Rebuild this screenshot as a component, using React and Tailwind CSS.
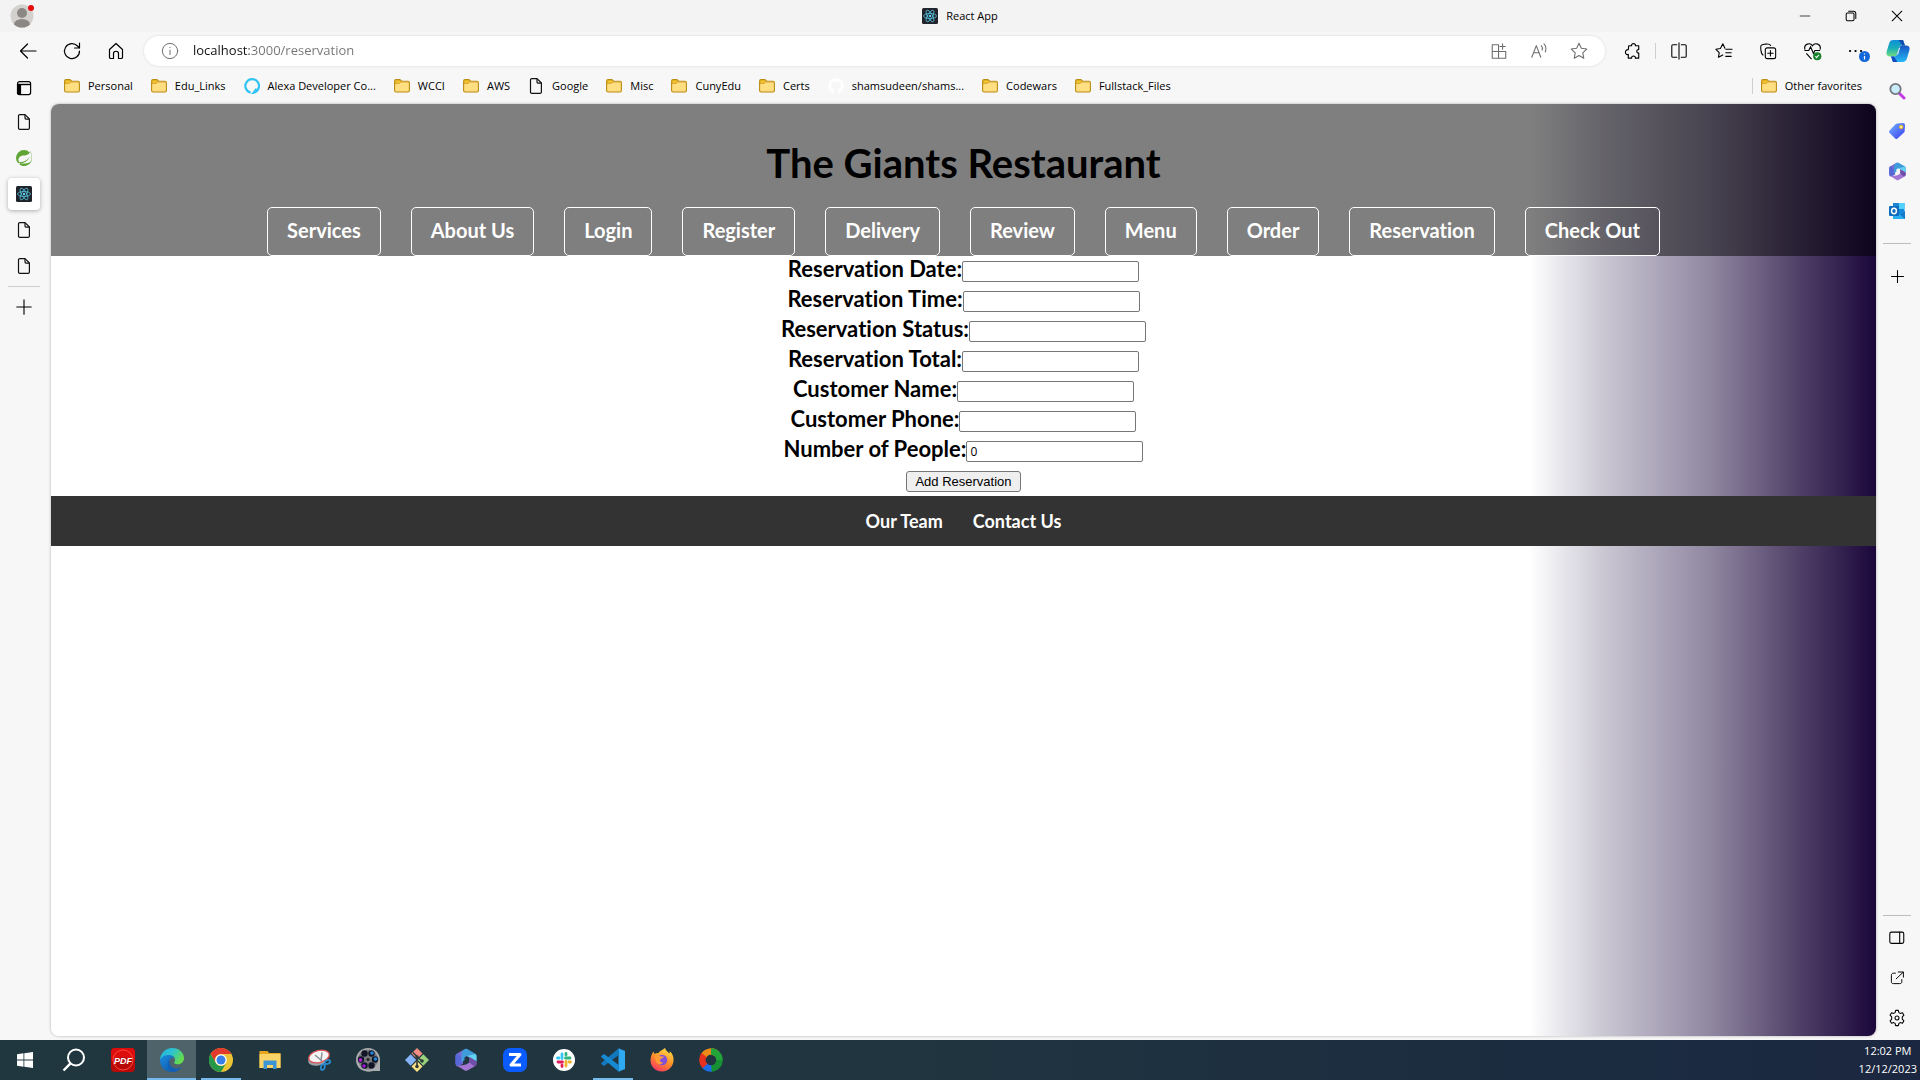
import React from "react";
import { SiSpring } from "react-icons/si";
import { FaGithub } from "react-icons/fa";

const bookmarks = [
  ["folder", "Personal"],
  ["folder", "Edu_Links"],
  ["alexa", "Alexa Developer Co..."],
  ["folder", "WCCI"],
  ["folder", "AWS"],
  ["page", "Google"],
  ["folder", "Misc"],
  ["folder", "CunyEdu"],
  ["folder", "Certs"],
  ["github", "shamsudeen/shams..."],
  ["folder", "Codewars"],
  ["folder", "Fullstack_Files"],
];

const navLinks = ["Services", "About Us", "Login", "Register", "Delivery", "Review", "Menu", "Order", "Reservation", "Check Out"];

const fields = [
  ["date", "Reservation Date:", ""],
  ["time", "Reservation Time:", ""],
  ["status", "Reservation Status:", ""],
  ["total", "Reservation Total:", ""],
  ["name", "Customer Name:", ""],
  ["phone", "Customer Phone:", ""],
  ["people", "Number of People:", "0"],
];

function Line({ size = 20, className = "", children, width = 1.2 }) {
  return (
    <svg width={size} height={size} viewBox="0 0 20 20" fill="none" stroke="currentColor" strokeWidth={width} strokeLinecap="round" strokeLinejoin="round" className={className} aria-hidden="true">
      {children}
    </svg>
  );
}

function Folder() {
  return (
    <svg width="16" height="16" viewBox="0 0 16 16" aria-hidden="true">
      <path d="M.6 3.2c0-.9.6-1.6 1.5-1.6h3.4c.5 0 .9.2 1.2.6l.9 1h6.3c.9 0 1.5.7 1.5 1.5v7.8c0 .9-.6 1.5-1.5 1.5H2.1c-.9 0-1.5-.6-1.5-1.5z" fill="#ffdf82" stroke="#b98a10" strokeWidth="1.1" />
      <path d="M1.1 5.4V3.2c0-.6.4-1.1 1-1.1h3.4l1.6 1.6-1.2 1.2c-.3.3-.6.5-1 .5z" fill="#f5c32f" stroke="#c4961a" strokeWidth=".7" />
      <path d="M6.7 3.8h7.4c.5 0 .9.3 1 .8H6z" fill="#d9a93c" />
    </svg>
  );
}

function PageIcon() {
  return (
    <svg width="16" height="16" viewBox="0 0 16 16" fill="none" stroke="#111" strokeWidth="1.2" strokeLinejoin="round" aria-hidden="true">
      <path d="M3.8.6h5.2l4.4 4.4v9.1c0 .8-.5 1.3-1.3 1.3H3.8c-.8 0-1.3-.5-1.3-1.3V1.9C2.500 1.100 3 .6 3.800.6z" />
      <path d="M9 .8v3.300c0 .6.4 1 1 1h3.200" />
    </svg>
  );
}

function AlexaIcon() {
  return (
    <svg width="16" height="16" viewBox="0 0 16 16" aria-hidden="true">
      <path d="M6.600 14.600A6.800 6.800 0 1 1 9.800 14.600C11 13.300 11.800 12 12.300 10.600" fill="none" stroke="#31c4f3" strokeWidth="2.200" />
    </svg>
  );
}

function ReactIcon() {
  return (
    <svg width="16" height="16" viewBox="0 0 32 32" aria-hidden="true">
      <rect width="32" height="32" rx="3" fill="#20232a" />
      <g fill="none" stroke="#53c1de" strokeWidth="1.600">
        <ellipse cx="16" cy="16" rx="13" ry="5" />
        <ellipse cx="16" cy="16" rx="13" ry="5" transform="rotate(60 16 16)" />
        <ellipse cx="16" cy="16" rx="13" ry="5" transform="rotate(120 16 16)" />
      </g>
      <circle cx="16" cy="16" r="2.400" fill="#61dafb" />
    </svg>
  );
}

function BookmarkIcon({ kind }) {
  if (kind === "folder") return <Folder />;
  if (kind === "page") return <PageIcon />;
  if (kind === "alexa") return <AlexaIcon />;
  return <FaGithub size={16} color="#ffffff" aria-hidden="true" />;
}

function Avatar() {
  return (
    <svg width="26" height="26" viewBox="0 0 26 26" aria-hidden="true">
      <defs><clipPath id="avatar"><circle cx="12" cy="13" r="11.500" /></clipPath></defs>
      <circle cx="12" cy="13" r="11.500" fill="#d3d1ce" />
      <g clipPath="url(#avatar)" fill="#8b8784">
        <circle cx="12" cy="10" r="5" />
        <ellipse cx="12" cy="21.500" rx="8" ry="5.500" />
      </g>
      <circle cx="21" cy="5" r="3" fill="#e60c0c" />
    </svg>
  );
}

function Copilot() {
  return (
    <svg width="24" height="24" viewBox="0 0 24 24" aria-hidden="true">
      <defs>
        <linearGradient id="cpA" x1="0" y1="0" x2="0" y2="1"><stop offset="0" stopColor="#0c8fd8" /><stop offset=".5" stopColor="#19aeb8" /><stop offset="1" stopColor="#73dc7c" /></linearGradient>
        <linearGradient id="cpB" x1="0" y1="0" x2="0" y2="1"><stop offset="0" stopColor="#1557c5" /><stop offset="1" stopColor="#26b8f5" /></linearGradient>
      </defs>
      <path d="M11 1h6l2 5.500h-3c-2 0-2.600 1-3.100 2.500L11.500 14c-.7 2-1.500 3.500-4 3.500H4c-3 0-4.200-2-3.300-5L3 4.700C3.800 2 5 1 7.500 1z" fill="url(#cpA)" />
      <path d="M13 23H7l-2-5.500h3c2 0 2.600-1 3.100-2.500l1.400-5c.7-2 1.500-3.500 4-3.500H20c3 0 4.200 2 3.300 5L21 19.300c-.8 2.700-2 3.700-4.500 3.700z" fill="url(#cpB)" />
      <path d="M12.500 1H17l2 5.500h-2.800z" fill="#124eb2" />
      <path d="M11.500 23H7l-2-5.500h3z" fill="#144ac0" />
      <path d="m12.900 9-1.400 5-.7 1.500h1.300l1.400-5 .8-2z" fill="#e8f8fb" />
    </svg>
  );
}

function M365({ size }) {
  return (
    <svg width={size} height={size} viewBox="0 0 24 24" aria-hidden="true">
      <path d="M11 1 3.500 5.200C2 6 1.500 7 1.500 8.500v7c0 2.300 1.600 3.600 3.800 2.500L9 15.500v-7z" fill="#7a6ad4" />
      <path d="M1.500 14.500c0 2.500 1.800 4 4.200 2.700L9 15.400l-2-1.600V9L3.400 5.300C2 6.200 1.500 7 1.500 8.500z" fill="#5668d8" />
      <path d="M11 1C8 2.800 7.500 4.500 7.500 7v7l3-1.800V9.500L13 8l9.500 5V8.500c0-1.500-.5-2.500-2-3.300L13.300 1c-.8-.4-1.600-.4-2.300 0z" fill="#3f9cdb" />
      <path d="m13 8 9.500 5.300V8.500c0-1-.3-1.900-1-2.500z" fill="#63d2f0" />
      <path d="M22.500 13.500 15.500 9v5.500L12 16.600 3.500 18l7.300 4.600c.9.500 1.600.5 2.500 0l7.200-4.100c1.500-.9 2-1.800 2-3.300z" fill="#a276d2" />
      <path d="M22.500 13.500 15.500 9v5.500l4.800 4c1.600-.9 2.200-1.800 2.200-3.300z" fill="#704da9" />
    </svg>
  );
}

function SearchColor() {
  return (
    <svg width="18" height="18" viewBox="0 0 18 18" aria-hidden="true">
      <path d="m11 11 5 5" stroke="#c43be5" strokeWidth="3" strokeLinecap="round" />
      <circle cx="7.500" cy="7" r="5.200" fill="#c9ecfb" stroke="#73777d" strokeWidth="1.800" />
    </svg>
  );
}

function Tag() {
  return (
    <svg width="18" height="18" viewBox="0 0 18 18" aria-hidden="true">
      <defs><linearGradient id="tag" x1="0" y1="0" x2="1" y2="1"><stop offset="0" stopColor="#72b4fb" /><stop offset="1" stopColor="#3a3cf1" /></linearGradient></defs>
      <path d="M9 1.500 15 1c1.200 0 2 .8 2 2l-.3 6c0 .6-.3 1-.7 1.500L9.500 16.500c-.8.700-1.600.7-2.300 0L1.600 11c-.8-.8-.8-1.600 0-2.400L7.500 2.200C8 1.800 8.400 1.500 9 1.500z" fill="url(#tag)" />
      <circle cx="13.200" cy="5" r="1.700" fill="#fff3a0" stroke="#f0b51c" strokeWidth="1" />
    </svg>
  );
}

function Outlook() {
  return (
    <svg width="18" height="18" viewBox="0 0 18 18" aria-hidden="true">
      <path d="M5 1h11.500v15.500H5z" fill="#1689da" />
      <path d="M5 1h6v6H5z" fill="#1a86d3" />
      <path d="M11 1h5.500v6H11z" fill="#52d2fb" />
      <path d="m17 9-6 4-6-2v6h12z" fill="#29aef0" />
      <path d="m17 9-5 3.500 5 4.500z" fill="#1479c9" />
      <rect x="1" y="4" width="10" height="10" rx="1" fill="#0f6dbd" />
      <ellipse cx="6" cy="9" rx="2.400" ry="2.700" fill="none" stroke="#fff" strokeWidth="1.500" />
    </svg>
  );
}

function TaskIcon({ kind }) {
  const box = { width: 24, height: 24, viewBox: "0 0 24 24", "aria-hidden": true };
  switch (kind) {
    case "Start":
      return (
        <svg {...box}><path d="M4 6.200 10.500 5.300V11.600H4zM11.300 5.200 20 4v7.600h-8.700zM4 12.400h6.500v6.300L4 17.800zM11.300 12.400H20V20l-8.700-1.200z" fill="#fff" /></svg>
      );
    case "Search":
      return (
        <svg {...box} fill="none" stroke="#fff" strokeWidth="2"><circle cx="14" cy="9.500" r="8" /><path d="M8.500 15.300 1.500 22.500" strokeWidth="2.400" /></svg>
      );
    case "PDF":
      return (
        <svg {...box}>
          <rect width="24" height="24" rx="4" fill="#b80909" />
          <path d="M4 0h16a4 4 0 0 1 4 4v9C17 8 7 8 0 13V4a4 4 0 0 1 4-4z" fill="#dc0d0d" />
          <circle cx="12" cy="12" r="10" fill="none" stroke="#ff4538" strokeWidth="1" />
          <text x="12" y="15.500" textAnchor="middle" fontFamily="Liberation Sans, sans-serif" fontWeight="700" fontStyle="italic" fontSize="9" fill="#fff">PDF</text>
        </svg>
      );
    case "Edge":
      return (
        <svg {...box}>
          <defs>
            <linearGradient id="edgeTop" x1="0" y1="0" x2="1" y2=".5"><stop offset="0" stopColor="#24b1df" /><stop offset=".5" stopColor="#2cc3d2" /><stop offset="1" stopColor="#65dc4b" /></linearGradient>
            <linearGradient id="edgeLow" x1="0" y1="0" x2="1" y2="1"><stop offset="0" stopColor="#1b8be0" /><stop offset="1" stopColor="#0c4fa0" /></linearGradient>
          </defs>
          <path d="M0 12C.4 5 5.300 0 12 0c7.500 0 12 5 12 10 0 4-3 6.300-6.300 6.300-2.700 0-4.400-1-3.200-2.500 1.600-2 .2-6-4.500-6-5 0-8.500 2-10 4.200z" fill="url(#edgeTop)" />
          <path d="M0 12c1.500-3 4.500-5 9-4.900 3 0 4.500 1.200 5 2.400-3 0-5.500 2.300-5.500 5.500 0 4.500 4.700 6.700 9 5.700 1.300-.3 2.300-.8 3.600-1.500C19.300 22 16 24 12 24 5 24 0 18.500 0 12z" fill="url(#edgeLow)" />
          <path d="M9.500 11.500C6 15 7.500 21.500 12.500 24c3.500 0 6.500-1.800 8.600-4.800-5 2.700-12.400 1.100-11.600-7.700z" fill="#1460b5" />
        </svg>
      );
    case "Chrome":
      return (
        <svg {...box}>
          <circle cx="12" cy="12" r="12" fill="#eac435" />
          <path d="M1.600 6A12 12 0 0 1 22.400 6H12a6 6 0 0 0-5.200 9z" fill="#e1392c" />
          <path d="M1.600 6A12 12 0 0 0 12 24l5.200-9A6 6 0 0 1 6.800 15z" fill="#25994a" />
          <circle cx="12" cy="12" r="5.800" fill="#fff" />
          <circle cx="12" cy="12" r="4.500" fill="#397fea" />
        </svg>
      );
    case "File Explorer":
      return (
        <svg {...box}>
          <path d="M1.500 3h8l1.500 2h11.500v15h-21z" fill="#e8a51e" />
          <path d="M1.500 6h21v14h-21z" fill="#fbd469" />
          <path d="M5.500 12.500h13V21H15v-4H9v4H5.500z" fill="#3d95d5" />
        </svg>
      );
    case "Snipping Tool":
      return (
        <svg {...box}>
          <ellipse cx="11" cy="11.500" rx="10" ry="6" transform="rotate(-14 11 11.500)" fill="#9ca2a6" />
          <ellipse cx="12" cy="8.500" rx="10.500" ry="6" transform="rotate(-14 12 8.500)" fill="#f4f4f4" stroke="#dc5256" strokeWidth="1.300" />
          <path d="M8 7l7 6M15 4.500 14 13" stroke="#8a9298" strokeWidth="1.500" />
          <g fill="none" stroke="#2b8dd4" strokeWidth="1.700"><ellipse cx="20.500" cy="14" rx="2.800" ry="1.800" transform="rotate(-20 20.500 14)" /><ellipse cx="15.800" cy="19" rx="1.900" ry="3" transform="rotate(15 15.800 19)" /></g>
        </svg>
      );
    case "Movie Maker":
      return (
        <svg {...box}>
          <path d="M12 0c7 0 12 5 12 12 0 4 0 8 1 11h-8C14 24 11 24 9 23 4 22 0 18 0 12 0 5 5 0 12 0z" fill="#a9abae" />
          <circle cx="12" cy="11.500" r="10" fill="#77797d" />
          <g fill="#111526"><circle cx="8.500" cy="5.500" r="3.200" /><circle cx="15.500" cy="5.500" r="3.200" /><circle cx="19" cy="11.500" r="3.200" /><circle cx="15.500" cy="17.500" r="3.200" /><circle cx="8.500" cy="17.500" r="3.200" /><circle cx="5" cy="11.500" r="3.200" /></g>
          <circle cx="16" cy="5" r="1.800" fill="#2187dd" /><circle cx="19.500" cy="11" r="1.800" fill="#2187dd" /><circle cx="4.500" cy="12" r="1.800" fill="#c11be2" /><circle cx="8" cy="18" r="1.800" fill="#9c15d2" />
          <circle cx="12" cy="11.500" r="1.500" fill="#222" />
        </svg>
      );
    case "Git":
      return (
        <svg {...box}>
          <path d="m12 0 5.500 5.500L12 11 6.500 5.500z" fill="#f18b83" />
          <path d="m5.700 6.300 5.500 5.700-5.500 5.700L0 12z" fill="#87b4f7" />
          <path d="M18.300 6.300 24 12l-5.700 5.700-5.500-5.700z" fill="#9bd37d" />
          <path d="m12 13 5.500 5.500L12 24l-5.500-5.500z" fill="#fbe184" />
          <path d="M8 4.500 12 8.500v10M12 9l5 4" fill="none" stroke="#303a3b" strokeWidth="1.600" />
          <circle cx="12" cy="9" r="1.800" fill="#303a3b" /><circle cx="17" cy="13" r="1.800" fill="#303a3b" /><circle cx="12" cy="18.500" r="1.800" fill="#303a3b" />
        </svg>
      );
    case "Microsoft 365":
      return <M365 size={24} />;
    case "Zoom":
      return (
        <svg {...box}><rect width="24" height="24" rx="7" fill="#0b5cff" /><path d="M6 6.500h11L8 17h10" fill="none" stroke="#fff" strokeWidth="3" strokeLinejoin="round" /></svg>
      );
    case "Slack":
      return (
        <svg {...box}>
          <circle cx="12" cy="12" r="11" fill="#fff" />
          <g strokeWidth="2.800" strokeLinecap="round">
            <path d="M10 6v4.500" stroke="#36c5f0" /><path d="M5.500 10H7" stroke="#36c5f0" />
            <path d="M18 10h-4.500" stroke="#2eb67d" /><path d="M14 5.500V7" stroke="#2eb67d" />
            <path d="M14 18v-4.500" stroke="#ecb22e" /><path d="M18.500 14H17" stroke="#ecb22e" />
            <path d="M6 14h4.500" stroke="#e01e5a" /><path d="M10 18.500V17" stroke="#e01e5a" />
          </g>
        </svg>
      );
    case "Visual Studio Code":
      return (
        <svg {...box}>
          <path d="M17.500.3 24 3v18l-6.500 2.700z" fill="#2fa9f2" />
          <path d="M17.800.3V7L3 18 .5 16.300c-.5-.4-.5-1 0-1.500z" fill="#1277bd" />
          <path d="M17.800 23.700V17L3 6 .5 7.700c-.5.400-.5 1 0 1.500z" fill="#168bd4" />
        </svg>
      );
    case "Firefox":
      return (
        <svg {...box}>
          <defs><linearGradient id="fox" x1=".8" y1="0" x2=".3" y2="1"><stop offset="0" stopColor="#ffe14a" /><stop offset=".5" stopColor="#ff9326" /><stop offset="1" stopColor="#f53862" /></linearGradient></defs>
          <path d="M15 0c1 3 3 4 4.500 5.500.3-.8.300-1.600 0-2.500C22.500 5.500 24 9 23.500 13 22.800 19.200 18 23.500 12 23.500S.5 19 .5 12.500C.5 9 1.500 6 3.500 3.500L4.500 6c1.500-1 2.500-1 3.800-.8C10 2.500 12 2.500 15 0z" fill="url(#fox)" />
          <circle cx="12" cy="12" r="5.300" fill="#8450d8" />
          <path d="M4.500 7C7 6.500 9 7 10.500 8.500H14c-.5 2-3 1.500-3.800 3-1 2 .8 3.500 3 2.800-2 3.700-7.200 2.200-7.500-2z" fill="#ff9b35" />
        </svg>
      );
    default:
      return (
        <svg {...box} fill="none" strokeWidth="6.500">
          <path d="M4.500 8A8.500 8.500 0 0 1 18 6" stroke="#ee8a16" />
          <path d="M12 3.500A8.500 8.500 0 0 1 20.500 12" stroke="#22a43a" />
          <path d="M20.500 12A8.500 8.500 0 0 1 12 20.500" stroke="#178f35" />
          <path d="M12.500 20.500A8.500 8.500 0 0 1 5 16.800" stroke="#1d6ee6" />
          <path d="M6 18A8.500 8.500 0 0 1 5 7" stroke="#e5311d" />
        </svg>
      );
  }
}

const tasks = [
  ["Start"], ["Search"], ["PDF"], ["Edge", "active"], ["Chrome", "open"], ["File Explorer"], ["Snipping Tool"], ["Movie Maker"],
  ["Git"], ["Microsoft 365"], ["Zoom"], ["Slack"], ["Visual Studio Code", "open"], ["Firefox"], ["Browser"],
];

function IconButton({ label, className = "w-11", children }) {
  return (
    <button type="button" aria-label={label} className={`flex shrink-0 items-center justify-center ${className}`}>
      {children}
    </button>
  );
}

function TitleBar() {
  return (
    <header className="grid h-8 shrink-0 grid-cols-[1fr_auto_1fr] items-center bg-[#f3f3f3]">
      <IconButton label="Profile" className="ml-2.5 w-[26px]"><Avatar /></IconButton>
      <div className="flex items-center gap-2 text-[11px]"><ReactIcon /><span>React App</span></div>
      <div className="flex justify-end">
        <IconButton label="Minimize" className="w-[46px]"><Line size={12}><path d="M2 10h16" /></Line></IconButton>
        <IconButton label="Restore" className="w-[46px]"><Line size={12} width={1.700}><rect x="2" y="5" width="13" height="13" rx="2" /><path d="M6 2h8c3 0 4 1 4 4v8" /></Line></IconButton>
        <IconButton label="Close" className="w-[46px]"><Line size={12} width={1.700}><path d="m2 2 16 16M18 2 2 18" /></Line></IconButton>
      </div>
    </header>
  );
}

function Toolbar() {
  return (
    <div className="flex h-[38px] shrink-0 items-center pl-1.5">
      <IconButton label="Back"><Line><path d="M18 10H2.500M9.500 3 2.500 10l7 7" /></Line></IconButton>
      <IconButton label="Refresh"><Line><path d="M17.500 10A7.500 7.500 0 1 1 15.500 5l2 2M17.500 2v5h-5" /></Line></IconButton>
      <IconButton label="Home"><Line><path d="M3.500 8.500 10 2.500l6.500 6v7.700c0 .8-.5 1.300-1.300 1.300h-2.700v-5c0-3-5-3-5 0v5H4.800c-.8 0-1.300-.5-1.300-1.300z" /></Line></IconButton>
      <div className="ml-1.5 flex h-[30px] min-w-0 flex-1 items-center rounded-full bg-white pr-1.5 pl-[17px] text-[#6e6e6e] shadow-[0_0_3px_rgba(0,0,0,0.12)]">
        <Line size={18} width={1.100}><circle cx="10" cy="10" r="8.500" /><path d="M10 9v5M10 6v.3" /></Line>
        <input aria-label="Address" defaultValue="localhost:3000/reservation" className="ml-3.5 min-w-0 flex-1 bg-[linear-gradient(90deg,#111_56px,#737373_56px)] bg-clip-text text-[13px] text-transparent outline-none" />
        <IconButton label="Install app" className="w-10"><Line size={18}><path d="M2.500 3h7v15h-7zM2.500 10.500h15V18h-15M14 2v6M11 5h6" /></Line></IconButton>
        <IconButton label="Read aloud" className="w-10"><Line size={18}><path d="m2 17 5-13 5 13M4 12h6M12.500 4c1.500 1.500 1.500 3.500 1 5M15.500 2c2.500 2.500 2.500 6 1.500 9" /></Line></IconButton>
        <IconButton label="Add to favorites" className="w-10"><Line size={18}><path d="m10 1.500 2.600 5.500 6 .8-4.400 4.200 1.100 6-5.300-2.900L4.700 18l1.100-6L1.400 7.800l6-.8z" /></Line></IconButton>
      </div>
      <div className="ml-1.5 flex items-center">
        <IconButton label="Extensions"><Line size={19}><path d="M5 4h3c-.7-3 4.700-3 4 0h3.500v4c-2.700-.8-2.700 4.300 0 3.500V17H12c.7-3-4.700-3-4 0H4.500v-4C.5 14.500.5 7.500 4.500 8z" /></Line></IconButton>
        <span className="h-4 w-px bg-[#cfcfcf]" />
        <IconButton label="Split screen" className="w-[46px]"><Line size={18}><path d="M7.500 3H3.300C2.400 3 2 3.500 2 4.300v11.400c0 .8.400 1.300 1.300 1.300h4.200M12.500 3h4.200c.9 0 1.300.5 1.300 1.300v11.400c0 .8-.4 1.300-1.300 1.300h-4.200M10 1v18" /></Line></IconButton>
        <IconButton label="Favorites"><Line size={18}><path d="M11 7 8.700 2 6 7.300l-5 .8 3.700 3.700L3.800 17l4.900-2.500M12 8h7M12 12h6M12 16h6" /></Line></IconButton>
        <IconButton label="Collections"><Line size={18}><rect x="7" y="6.500" width="11.500" height="12" rx="2.200" /><path d="M12.700 9.500v6M9.700 12.500h6M4.500 14.500C2.500 13.500 2.500 12 2 8c-.5-4 0-5 4-5.500s6-1 7 1.500" /></Line></IconButton>
        <IconButton label="Browser essentials">
          <svg width="19" height="19" viewBox="0 0 20 20" fill="none" stroke="currentColor" strokeWidth="1.200" aria-hidden="true">
            <path d="M2 8C.5 2 7.500 0 10 4c2.500-4 9.500-2 8 4M1.500 9H6l2-4 3 7 1.500-3H18M3.500 12l5.500 6" />
            <circle cx="15" cy="15" r="4.300" fill="#14812b" stroke="none" /><path d="m13 15 1.300 1.500 2.500-3" stroke="#fff" />
          </svg>
        </IconButton>
        <IconButton label="Settings and more">
          <span className="relative">
            <Line size={20}><path d="M4 10h.1M9.500 10h.1M15 10h.1" strokeWidth="2.200" /></Line>
            <svg width="11" height="11" viewBox="0 0 11 11" className="absolute -right-1 bottom-[-1px]" aria-hidden="true"><circle cx="5.500" cy="5.500" r="5.500" fill="#1268d8" /><path d="M5.500 5v3.500M5.500 2.500v1" stroke="#fff" strokeWidth="1.200" /></svg>
          </span>
        </IconButton>
        <IconButton label="Copilot" className="w-[42px] pr-0.5"><Copilot /></IconButton>
      </div>
    </div>
  );
}

function TabRail() {
  return (
    <nav aria-label="Tabs" className="flex w-[51px] shrink-0 flex-col items-center pr-[3px]">
      <IconButton label="Tab actions" className="h-[34px] w-8 pt-0.5">
        <svg width="16" height="16" viewBox="0 0 16 16" fill="none" stroke="#000" strokeWidth="1.200" aria-hidden="true"><rect x="1.600" y="1.600" width="13" height="13" rx="2" /><path d="M1.600 4.500h13" strokeWidth="1.400" /><path d="M1.500 4.500h3v10h-2l-1-1z" fill="#000" /></svg>
      </IconButton>
      <IconButton label="New tab" className="h-9 w-8"><PageIcon /></IconButton>
      <IconButton label="Spring" className="h-9 w-8"><SiSpring size={16} color="#5fa535" /></IconButton>
      <div className="flex h-9 items-center">
        <IconButton label="React App" className="h-8 w-8 rounded-[4px] bg-white shadow-[0_1px_4px_rgba(0,0,0,0.3)]"><ReactIcon /></IconButton>
      </div>
      <IconButton label="New tab" className="h-9 w-8"><PageIcon /></IconButton>
      <IconButton label="New tab" className="h-9 w-8"><PageIcon /></IconButton>
      <hr className="my-0.5 w-8 border-[#cdcdcd]" />
      <IconButton label="Open a tab" className="h-9 w-8"><Line size={16} width={1.400}><path d="M10 1v18M1 10h18" /></Line></IconButton>
    </nav>
  );
}

function SideRail() {
  return (
    <aside className="flex w-11 shrink-0 flex-col items-center pr-0.5 pb-0.5">
      <IconButton label="Search sidebar" className="h-[41px] w-8"><SearchColor /></IconButton>
      <IconButton label="Shopping" className="h-10 w-8"><Tag /></IconButton>
      <IconButton label="Microsoft 365" className="h-10 w-8"><M365 size={19} /></IconButton>
      <IconButton label="Outlook" className="h-10 w-8"><Outlook /></IconButton>
      <hr className="mt-3 mb-3 w-7 border-[#bdbdbd]" />
      <IconButton label="Customize" className="h-10 w-8"><Line size={15} width={1.400}><path d="M10 2v16M2 10h16" /></Line></IconButton>
      <div className="flex-1" />
      <hr className="mb-0.5 w-7 border-[#bdbdbd]" />
      <IconButton label="Toggle sidebar" className="h-10 w-8"><Line size={18}><rect x="2" y="3.500" width="15.500" height="12.500" rx="1.800" /><path d="M13 3.500V16" /></Line></IconButton>
      <IconButton label="Open in new window" className="h-10 w-8"><Line size={16}><path d="M8 4H5.500C4 4 3 5 3 6.500v8.300C3 16.300 4 17 5.500 17h8c1.500 0 2.500-.7 2.500-2.200V12M11.500 2.500h6.500V9M17.500 3 9 11" /></Line></IconButton>
      <IconButton label="Settings" className="h-10 w-8"><Line size={18}><circle cx="10" cy="10" r="2.200" /><path d="M8.500 1.500h3l.6 2.500 1.500.9 2.500-.7 1.600 2.700-1.800 1.800v2.600l1.800 1.800-1.600 2.700-2.500-.7-1.500.9-.6 2.500h-3L7.900 16l-1.500-.9-2.500.7-1.600-2.700 1.800-1.800V8.700L2.300 6.900l1.600-2.700 2.500.7L7.900 4z" /></Line></IconButton>
    </aside>
  );
}

function Bookmarks() {
  return (
    <div className="flex h-[34px] shrink-0 items-center justify-between pr-3.5 pb-0.5 pl-[13px] text-[11px]">
      <div className="flex items-center gap-[18px]">
        {bookmarks.map(([kind, name]) => (
          <button key={name} type="button" className="flex items-center gap-2 whitespace-nowrap"><BookmarkIcon kind={kind} />{name}</button>
        ))}
      </div>
      <button type="button" className="flex items-center gap-2 whitespace-nowrap"><span className="h-4 w-px bg-[#cfcfcf]" /><Folder />Other favorites</button>
    </div>
  );
}

function RestaurantPage() {
  return (
    <main className="min-h-0 flex-1 overflow-hidden rounded-lg bg-[linear-gradient(90deg,#fff_81%,#cbc8d4_85%,#8f86a0_91%,#5a4b70_95%,#1b073b_100%)] font-['Lato',sans-serif] font-bold shadow-[0_0_3px_rgba(0,0,0,0.3)] [font-variant-ligatures:none]">
      <header className="bg-black/50 pt-8">
        <h1 className="mb-4 text-center text-[40px] leading-[55px]">The Giants Restaurant</h1>
        <nav className="flex justify-center gap-[30px] text-[20px] leading-[45px] text-white">
          {navLinks.map((name) => (
            <a key={name} href="#" className="rounded-[5px] border border-white px-[19px] pb-0.5 whitespace-nowrap">{name}</a>
          ))}
        </nav>
      </header>
      <form className="flex flex-col items-center" onSubmit={(e) => e.preventDefault()}>
        {fields.map(([id, label, value]) => (
          <div key={id} className="flex h-[30px] items-center">
            <label htmlFor={id} className="pb-1 text-[22px] leading-[26px]">{label}</label>
            <input id={id} defaultValue={value} className="h-[21px] w-[177px] rounded-[2px] border border-[#767676] bg-white px-[3px] font-['Open_Sans',sans-serif] text-[12px] font-normal" />
          </div>
        ))}
        <div className="flex h-[30px] items-center">
          <button type="submit" className="h-[21px] rounded-[3px] border border-[#767676] bg-[#efefef] px-2 font-['Liberation_Sans',sans-serif] text-[13px] leading-[19px] font-normal">Add Reservation</button>
        </div>
      </form>
      <footer className="flex justify-center gap-[30px] bg-[#333] text-[18px] leading-[50px] text-white">
        <a href="#">Our Team</a>
        <a href="#">Contact Us</a>
      </footer>
    </main>
  );
}

function Taskbar() {
  return (
    <footer className="flex h-10 shrink-0 items-stretch justify-between bg-[linear-gradient(90deg,#213740,#20353f_45%,#1b2c40_80%,#1b2740)] text-white">
      <div className="flex">
        {tasks.map(([name, state]) => (
          <button key={name} type="button" aria-label={name} className={`flex w-[49px] flex-col items-center justify-between pt-2 ${state === "active" ? "bg-[#4f636b]" : ""}`}>
            <TaskIcon kind={name} />
            {state && <span className={`h-0.5 bg-[#76b9ed] ${state === "active" ? "w-full" : "w-10"}`} />}
          </button>
        ))}
      </div>
      <div className="flex flex-col items-center justify-center pr-[3px] text-[11px] leading-[18px]"><span>12:02 PM</span><span>12/12/2023</span></div>
    </footer>
  );
}

export default function App() {
  return (
    <div className="flex h-screen flex-col overflow-hidden bg-[#f7f7f7] font-['Open_Sans','Noto_Sans',sans-serif] text-black">
      <TitleBar />
      <Toolbar />
      <div className="flex min-h-0 flex-1">
        <TabRail />
        <div className="flex min-w-0 flex-1 flex-col pb-1">
          <Bookmarks />
          <RestaurantPage />
        </div>
        <SideRail />
      </div>
      <Taskbar />
    </div>
  );
}
